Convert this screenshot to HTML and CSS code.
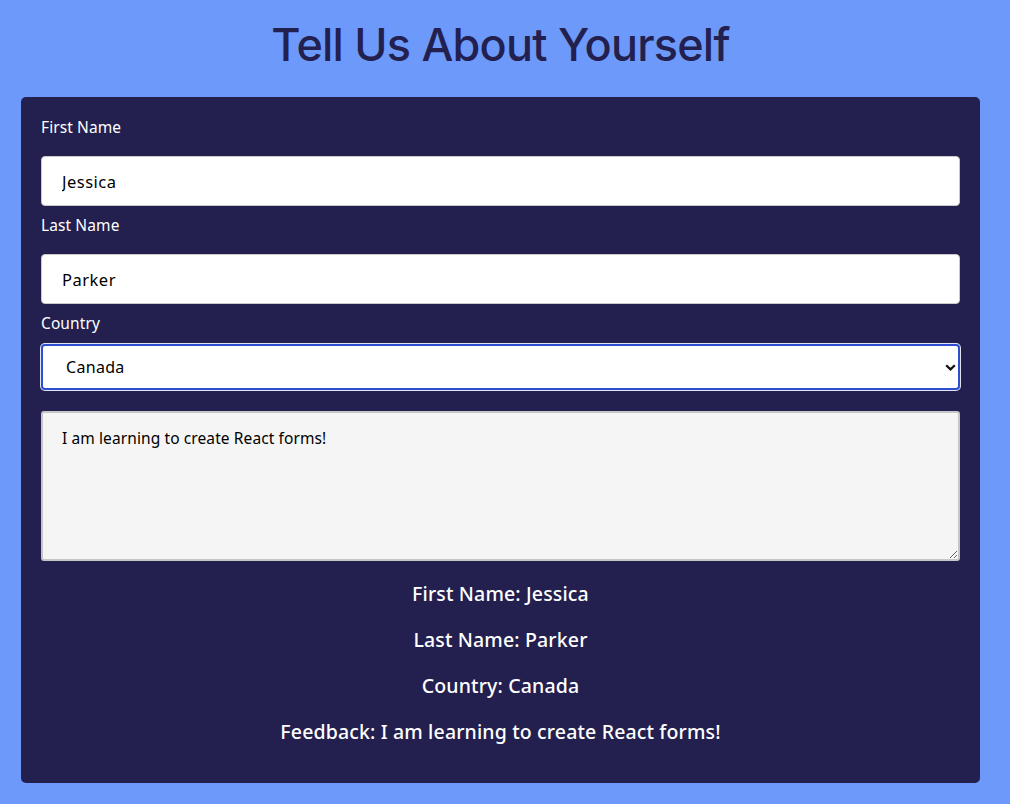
FILE: index.html
```html
<!DOCTYPE html>
<html lang="en">
<head>
<meta charset="utf-8">
<title>Tell Us About Yourself</title>
<link rel="stylesheet" href="styles.css">
</head>
<body>
  <h1 class="title">Tell Us About Yourself</h1>
  <form class="card">
    <label class="label" for="first">First Name</label>
    <input class="field" id="first" type="text" value="Jessica">
    <label class="label" for="last">Last Name</label>
    <input class="field" id="last" type="text" value="Parker">
    <label class="label label-tight" for="country">Country</label>
    <div class="select-wrap">
      <select class="select" id="country">
        <option>Canada</option>
        <option>USA</option>
        <option>Mexico</option>
      </select>
      <svg class="chevron" width="11" height="7" viewBox="0 0 11 7"><path d="M1.2 1.2 L5.5 5.4 L9.8 1.2" fill="none" stroke="#111" stroke-width="2.2"/></svg>
    </div>
    <textarea class="area">I am learning to create React forms!</textarea>
    <div class="output">
      <p class="line">First Name: Jessica</p>
      <p class="line">Last Name: Parker</p>
      <p class="line">Country: Canada</p>
      <p class="line">Feedback: I am learning to create React forms!</p>
    </div>
  </form>
</body>
</html>
```
FILE: styles.css
```css
* { box-sizing: border-box; }
body {
  margin: 0;
  background: #6d9afa;
  font-family: "Noto Sans", "Open Sans", sans-serif;
  padding: 0 30px 21px 21px;
}
.title {
  margin: 0;
  padding: 17px 0 0;
  height: 97px;
  text-align: center;
  font-family: Inter, "Liberation Sans", sans-serif;
  font-weight: 500;
  font-size: 45px;
  line-height: 56px;
  color: #231f4f;
  letter-spacing: -0.8px;
}
.card {
  background: #231f4e;
  border-radius: 5px;
  padding: 20px 20px 16px;
  display: flex;
  flex-direction: column;
}
.label {
  color: #fff;
  font-size: 15.5px;
  line-height: 20px;
  margin-bottom: 19px;
  letter-spacing: 0.1px;
}
.label-tight { margin-bottom: 11px; }
.field {
  height: 50px;
  margin-bottom: 9px;
  border: 1px solid #c9c9c9;
  border-radius: 4px;
  background: #fff;
  padding: 0 20px;
  font-family: inherit;
  font-size: 16.5px;
  letter-spacing: 0.5px;
  color: #000;
}
.select-wrap {
  position: relative;
  margin-bottom: 21px;
}
.select {
  width: 100%;
  height: 46px;
  appearance: none;
  -webkit-appearance: none;
  border: 2px solid #2d4fcf;
  border-radius: 4px;
  box-shadow: 0 0 0 1px #dfe4f5;
  background: #fff;
  padding: 0 23px;
  font-family: inherit;
  font-size: 16px;
  letter-spacing: 0.3px;
  color: #000;
}
.chevron {
  position: absolute;
  right: 4px;
  top: 20px;
}
.area {
  height: 150px;
  border: 2px solid #c6c6c6;
  border-radius: 3px;
  background: #f5f5f5;
  padding: 14px 19px;
  font-family: inherit;
  font-size: 15.5px;
  letter-spacing: 0.1px;
  color: #000;
  resize: vertical;
  margin-bottom: 22px;
}
.output {
  display: flex;
  flex-direction: column;
  gap: 24px;
  padding-bottom: 24px;
}
.line {
  margin: 0;
  text-align: center;
  color: #fff;
  font-size: 19.5px;
  font-weight: 500;
  line-height: 22px;
  letter-spacing: 0.15px;
}
```
